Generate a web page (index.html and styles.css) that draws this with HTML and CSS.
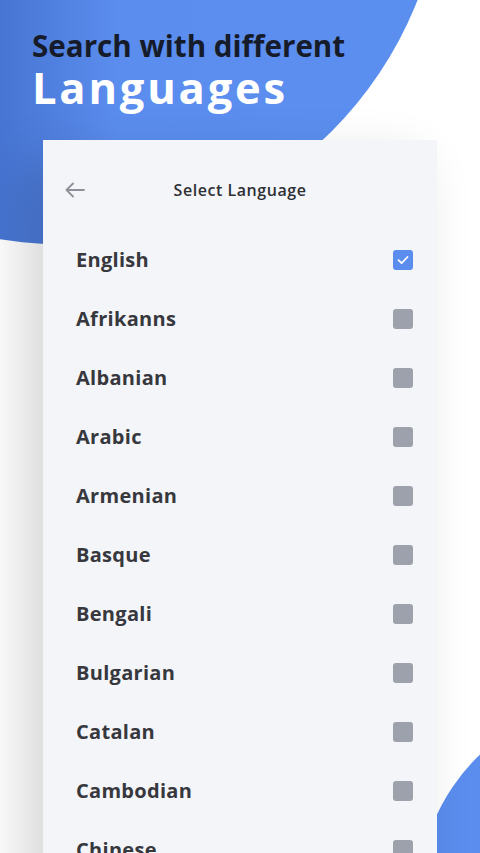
FILE: index.html
```html
<!DOCTYPE html>
<html>
<head>
<meta charset="utf-8">
<link rel="stylesheet" href="styles.css">
</head>
<body>
<div class="screen">
  <div class="blob-top"></div>
  <div class="blob-bottom"></div>
  <header class="hero">
    <div class="hero-line1">Search with different</div>
    <div class="hero-line2">Languages</div>
  </header>
  <section class="card">
    <div class="card-head">
      <svg class="back" width="22" height="16" viewBox="0 0 22 16"><path d="M20 8H2.5M9 1.5L2.5 8L9 14.5" fill="none" stroke="#8d9099" stroke-width="1.8" stroke-linecap="round" stroke-linejoin="round"/></svg>
      <div class="card-title">Select Language</div>
    </div>
    <ul class="list">
      <li class="row"><span>English</span><span class="box on"><svg width="20" height="20" viewBox="0 0 20 20"><path d="M5.5 10.2L8.6 13.2L14.5 7" fill="none" stroke="#fff" stroke-width="1.8" stroke-linecap="round" stroke-linejoin="round"/></svg></span></li>
      <li class="row"><span>Afrikanns</span><span class="box"></span></li>
      <li class="row"><span>Albanian</span><span class="box"></span></li>
      <li class="row"><span>Arabic</span><span class="box"></span></li>
      <li class="row"><span>Armenian</span><span class="box"></span></li>
      <li class="row"><span>Basque</span><span class="box"></span></li>
      <li class="row"><span>Bengali</span><span class="box"></span></li>
      <li class="row"><span>Bulgarian</span><span class="box"></span></li>
      <li class="row"><span>Catalan</span><span class="box"></span></li>
      <li class="row"><span>Cambodian</span><span class="box"></span></li>
      <li class="row"><span>Chinese</span><span class="box"></span></li>
    </ul>
  </section>
</div>
</body>
</html>
```
FILE: styles.css
```css
html, body {
  margin: 0;
  padding: 0;
  background: #ffffff;
}
.screen {
  position: relative;
  width: 480px;
  height: 853px;
  overflow: hidden;
  background: #ffffff;
  font-family: "Open Sans", "Lato", sans-serif;
}
.blob-top {
  position: absolute;
  left: -324px;
  top: -524px;
  width: 768px;
  height: 768px;
  border-radius: 50%;
  background: linear-gradient(90deg, #4674d2 320px, #5b8dee 440px, #5b8fef 100%);
  z-index: 0;
}
.blob-bottom {
  position: absolute;
  left: 418px;
  top: 698px;
  width: 404px;
  height: 404px;
  border-radius: 50%;
  background: #5b8dee;
  z-index: 0;
}
.hero {
  position: relative;
  z-index: 1;
  padding: 26px 0 0 32px;
  height: 140px;
  box-sizing: border-box;
}
.hero-line1 {
  font-weight: 700;
  font-size: 29.6px;
  line-height: 40px;
  color: #161b29;
  letter-spacing: 0;
}
.hero-line2 {
  font-weight: 700;
  font-size: 43.5px;
  line-height: 44px;
  color: #ffffff;
  letter-spacing: 2.8px;
}
.card {
  position: relative;
  z-index: 1;
  margin: 0 43px;
  height: 760px;
  background: #f4f5f9;
  box-shadow: -20px 20px 50px rgba(0, 0, 0, 0.16);
  padding-top: 30px;
  box-sizing: border-box;
}
.card-head {
  position: relative;
  height: 40px;
  display: flex;
  align-items: center;
  justify-content: center;
}
.back {
  position: absolute;
  left: 21px;
  top: 12px;
}
.card-title {
  font-weight: 600;
  font-size: 16px;
  color: #2e3036;
  letter-spacing: 0.55px;
}
.list {
  list-style: none;
  margin: 20px 0 0;
  padding: 0;
}
.row {
  height: 59px;
  display: flex;
  align-items: center;
  justify-content: space-between;
  padding: 0 24px 0 33px;
  font-weight: 700;
  font-size: 20px;
  color: #37383d;
  letter-spacing: 0.3px;
}
.box {
  width: 20px;
  height: 20px;
  border-radius: 3px;
  background: #9da1ab;
  display: block;
}
.box.on {
  background: #5b8dee;
}
.box svg {
  display: block;
}
```
